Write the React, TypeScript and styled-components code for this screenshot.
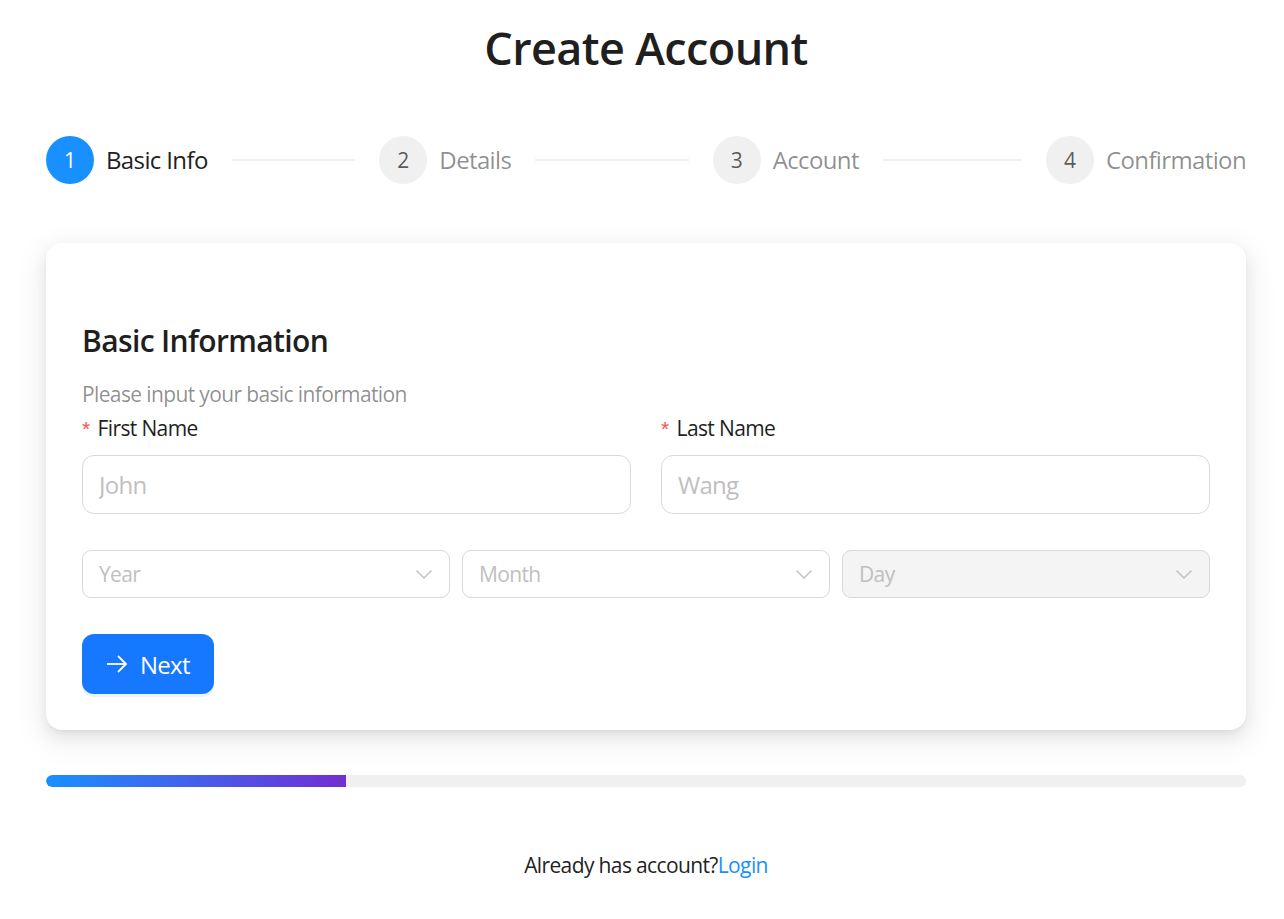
import React from "react";
import styled, { createGlobalStyle } from "styled-components";

const GlobalStyle = createGlobalStyle`
  html, body { margin: 0; padding: 0; background: #ffffff; }
  body {
    font-family: "Open Sans", "Noto Sans", "Liberation Sans", sans-serif;
    color: rgba(0, 0, 0, 0.88);
    font-size: 21px;
    letter-spacing: -0.03em;
  }
  * { box-sizing: border-box; }
`;

const Page = styled.div`
  margin: 0 38px 0 46px;
  padding-top: 18px;
  padding-bottom: 40px;
`;

const Title = styled.h1`
  margin: 0;
  text-align: center;
  font-size: 45px;
  line-height: 60px;
  font-weight: 600;
  color: #1f1f1f;
`;

const Steps = styled.div`
  display: flex;
  margin-top: 58px;
  height: 48px;
`;

const StepItem = styled.div<{ $last?: boolean; $first?: boolean }>`
  display: flex;
  align-items: center;
  flex: ${(p) => (p.$last ? "none" : "1 1 0")};
  padding-left: ${(p) => (p.$first ? "0" : "24px")};
  min-width: 0;
  overflow: hidden;
`;

const StepCircle = styled.div<{ $active?: boolean }>`
  width: 48px;
  height: 48px;
  border-radius: 50%;
  flex: none;
  display: flex;
  align-items: center;
  justify-content: center;
  font-size: 21px;
  letter-spacing: 0;
  background: ${(p) => (p.$active ? "#1890ff" : "#f0f0f0")};
  color: ${(p) => (p.$active ? "#ffffff" : "rgba(0,0,0,0.65)")};
  margin-right: 12px;
`;

const StepLabel = styled.span<{ $active?: boolean }>`
  font-size: 24px;
  line-height: 48px;
  white-space: nowrap;
  color: ${(p) => (p.$active ? "#1f1f1f" : "rgba(0,0,0,0.45)")};
`;

const StepLine = styled.div`
  flex: 1;
  height: 2px;
  background: #f0f0f0;
  margin-left: 24px;
`;

const Card = styled.div`
  margin-top: 59px;
  background: #ffffff;
  border-radius: 16px;
  padding: 36px;
  box-shadow: 0 6px 16px 0 rgba(0, 0, 0, 0.08),
    0 3px 6px -4px rgba(0, 0, 0, 0.12), 0 9px 28px 8px rgba(0, 0, 0, 0.05);
`;

const CardHeading = styled.h4`
  margin: 41px 0 0;
  font-size: 30px;
  line-height: 42px;
  font-weight: 600;
  color: #1f1f1f;
`;

const Description = styled.p`
  margin: 16px 0 0;
  font-size: 21px;
  line-height: 33px;
  color: rgba(0, 0, 0, 0.45);
`;

const NameRow = styled.div`
  display: grid;
  grid-template-columns: 1fr 1fr;
  column-gap: 30px;
  margin-bottom: 36px;
`;

const Field = styled.div`
  display: flex;
  flex-direction: column;
`;

const Label = styled.label`
  font-size: 21px;
  line-height: 33px;
  color: #1f1f1f;
  padding: 1px 0 10px;
`;

const Required = styled.span`
  color: #ff4d4f;
  margin-right: 8px;
  font-family: "SimSun", "Liberation Sans", sans-serif;
`;

const TextInput = styled.input`
  height: 59px;
  width: 100%;
  border: 1px solid #d9d9d9;
  border-radius: 12px;
  padding: 0 16px;
  font-family: inherit;
  font-size: 24px;
  letter-spacing: -0.03em;
  color: #1f1f1f;
  outline: none;
  background: #fff;
  &::placeholder { color: #bfbfbf; }
`;

const DateRow = styled.div`
  display: grid;
  grid-template-columns: repeat(3, 1fr);
  column-gap: 12px;
  margin-bottom: 36px;
`;

const SelectBox = styled.div<{ $disabled?: boolean }>`
  height: 48px;
  border: 1px solid #d9d9d9;
  border-radius: 9px;
  display: flex;
  align-items: center;
  justify-content: space-between;
  padding: 0 16px 0 16px;
  background: ${(p) => (p.$disabled ? "#f4f4f4" : "#ffffff")};
  color: #bfbfbf;
  font-size: 21px;
`;

const Chevron = styled.svg`
  width: 18px;
  height: 18px;
  color: #bfbfbf;
`;

const NextButton = styled.button`
  height: 60px;
  padding: 0 24px;
  border: none;
  border-radius: 12px;
  background: #1677ff;
  color: #ffffff;
  font-family: inherit;
  font-size: 24px;
  letter-spacing: -0.03em;
  display: inline-flex;
  align-items: center;
  gap: 12px;
  box-shadow: 0 3px 0 rgba(5, 145, 255, 0.1);
  cursor: pointer;
`;

const ArrowIcon = styled.svg`
  width: 22px;
  height: 22px;
`;

const Progress = styled.div`
  margin-top: 45px;
  height: 12px;
  border-radius: 6px;
  background: #f0f0f0;
  overflow: hidden;
`;

const ProgressFill = styled.div`
  height: 100%;
  border-radius: 6px 0 0 6px;
  background: linear-gradient(90deg, #1890ff, #722ed1);
`;

const Footer = styled.div`
  margin-top: 62px;
  text-align: center;
  font-size: 21px;
  line-height: 33px;
  color: #1f1f1f;
`;

const LoginLink = styled.a`
  color: #1890ff;
  text-decoration: none;
`;

const steps = ["Basic Info", "Details", "Account", "Confirmation"];

const ChevronDown = () => (
  <Chevron viewBox="0 0 18 18" fill="none">
    <polyline points="1.5,5.5 9,13 16.5,5.5" stroke="currentColor" strokeWidth="1.4" />
  </Chevron>
);

const Select = ({ placeholder, disabled }: { placeholder: string; disabled?: boolean }) => (
  <SelectBox $disabled={disabled}>
    <span>{placeholder}</span>
    <ChevronDown />
  </SelectBox>
);

export default function App() {
  const progress = 25;
  return (
    <>
      <GlobalStyle />
      <Page>
        <Title>Create Account</Title>
        <Steps>
          {steps.map((s, i) => (
            <StepItem key={s} $first={i === 0} $last={i === steps.length - 1}>
              <StepCircle $active={i === 0}>{i + 1}</StepCircle>
              <StepLabel $active={i === 0}>{s}</StepLabel>
              {i < steps.length - 1 && <StepLine />}
            </StepItem>
          ))}
        </Steps>
        <Card>
          <CardHeading>Basic Information</CardHeading>
          <Description>Please input your basic information</Description>
          <NameRow>
            <Field>
              <Label>
                <Required>*</Required>First Name
              </Label>
              <TextInput placeholder="John" />
            </Field>
            <Field>
              <Label>
                <Required>*</Required>Last Name
              </Label>
              <TextInput placeholder="Wang" />
            </Field>
          </NameRow>
          <DateRow>
            <Select placeholder="Year" />
            <Select placeholder="Month" />
            <Select placeholder="Day" disabled />
          </DateRow>
          <NextButton>
            <ArrowIcon viewBox="0 0 22 22" fill="none">
              <line x1="1" y1="11" x2="20" y2="11" stroke="currentColor" strokeWidth="1.8" />
              <polyline points="12,3 20,11 12,19" stroke="currentColor" strokeWidth="1.8" />
            </ArrowIcon>
            Next
          </NextButton>
        </Card>
        <Progress>
          <ProgressFill style={{ width: `${progress}%` }} />
        </Progress>
        <Footer>
          Already has account?<LoginLink href="#">Login</LoginLink>
        </Footer>
      </Page>
    </>
  );
}
